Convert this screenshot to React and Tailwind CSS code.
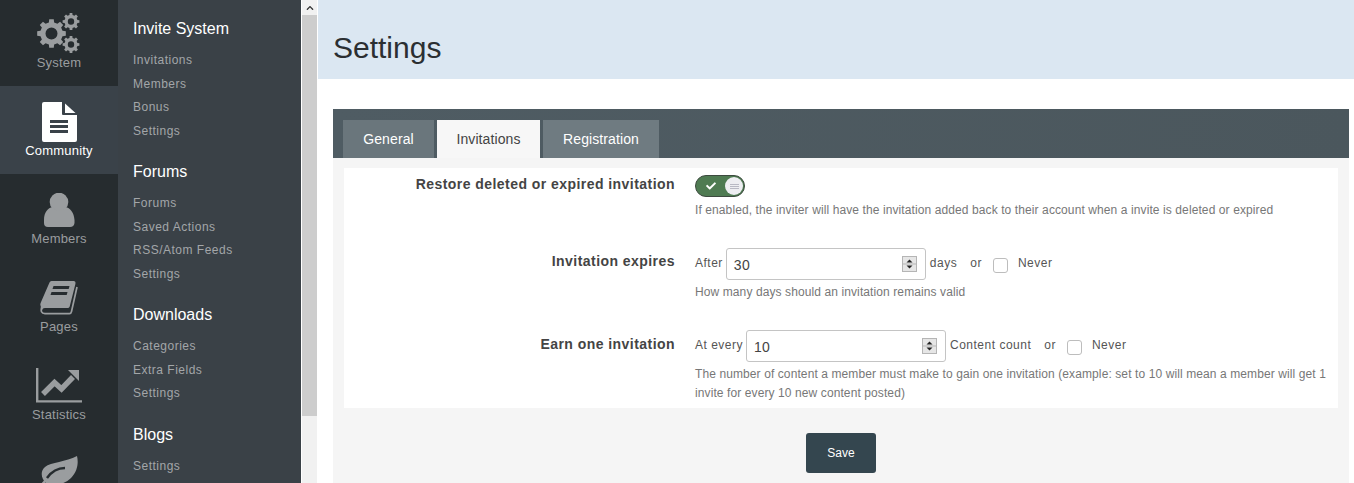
import React from "react";
import { FaCheck, FaChevronUp } from "react-icons/fa";

const font = { fontFamily: '"Liberation Sans", Arial, sans-serif' };

function gearPath(cx, cy, R, r, hole, teeth) {
  const step = (Math.PI * 2) / teeth;
  const pts = [];
  for (let i = 0; i < teeth; i++) {
    const a = i * step - Math.PI / 2;
    const w = step * 0.2;
    const wb = step * 0.3;
    pts.push([a - wb, r], [a - w, R], [a + w, R], [a + wb, r]);
  }
  const d = pts
    .map(([a, rad], i) => `${i ? "L" : "M"}${(cx + rad * Math.cos(a)).toFixed(2)} ${(cy + rad * Math.sin(a)).toFixed(2)}`)
    .join(" ");
  return `${d} Z M${cx - hole} ${cy} a${hole} ${hole} 0 1 0 ${hole * 2} 0 a${hole} ${hole} 0 1 0 ${-hole * 2} 0 Z`;
}

const GearsIcon = () => (
  <svg width="44" height="41" viewBox="0 0 44 41" fill="currentColor">
    <path fillRule="evenodd" d={gearPath(14.5, 20.5, 14.5, 11.3, 6, 8)} />
    <path fillRule="evenodd" d={gearPath(34, 8.5, 8.5, 6.6, 3.2, 8)} />
    <path fillRule="evenodd" d={gearPath(34, 31.5, 8.5, 6.6, 3.2, 8)} />
  </svg>
);

const FileIcon = () => (
  <svg width="35" height="40" viewBox="0 0 35 40" fill="currentColor" className="mt-[2px]">
    <path d="M0 2Q0 0 2 0H20V12Q20 13 21 13H35V38Q35 40 33 40H2Q0 40 0 38Z" />
    <path d="M23 1.5L33.5 11H23Z" />
    <rect x="8" y="18" width="18" height="3" fill="#3a4249" />
    <rect x="8" y="23" width="18" height="3" fill="#3a4249" />
    <rect x="8" y="28" width="18" height="3" fill="#3a4249" />
  </svg>
);

const UserIcon = () => (
  <svg width="32" height="34" viewBox="0 0 32 34" fill="currentColor" className="mt-[1px]">
    <circle cx="16" cy="9" r="9.3" />
    <path d="M1 27C1 19 5 15 9.5 14C12 18.5 20 18.5 22.5 14C27 15 31 19 31.5 27V30Q31 34 27 34H5Q1 34 1 30Z" />
  </svg>
);

const BookIcon = () => (
  <svg width="38" height="34" viewBox="0 0 38 34" fill="currentColor" className="mt-[1px]">
    <path d="M9.5 1.5Q10 0 11.5 0H33.5Q36 0 35.4 3L29.7 25.5Q29.3 27 27.5 27H5Q2 27 2.3 29.5L0.6 25Q0 23.5 0.6 22Z" />
    <path d="M2 25Q-0.5 32.7 5 32.7H29.5Q31 32.7 31.5 30.5L37 6" fill="none" stroke="currentColor" strokeWidth="1.7" />
    <path d="M13.5 5H29.5L28.7 8H12.5Z" fill="#262c2f" />
    <path d="M11.5 11H27.5L26.7 14H10.5Z" fill="#262c2f" />
  </svg>
);

const ChartIcon = () => (
  <svg width="47" height="35" viewBox="0 0 47 35" fill="currentColor" className="mt-[1px]">
    <path d="M1.2 0V33.4H46" fill="none" stroke="currentColor" strokeWidth="2.4" />
    <path d="M7 26L18.5 14.5L25.5 21L37 9" fill="none" stroke="currentColor" strokeWidth="5.5" />
    <path d="M32 2H43V13Z" />
  </svg>
);

const LeafIcon = () => (
  <svg width="42" height="36" viewBox="0 0 42 36" fill="currentColor">
    <path d="M39 1C40.5 7 40 16 33 23C26 30 16 31 8 28C3 24 2 16 7 12C13 7 28 7 39 1Z" />
    <path d="M9 23C14 16 20 13 27 13" fill="none" stroke="#262c2f" strokeWidth="2.5" />
    <path d="M1 33L8 25" fill="none" stroke="currentColor" strokeWidth="2.5" />
  </svg>
);

const navItems = [
  { label: "System", Icon: GearsIcon },
  { label: "Community", Icon: FileIcon, active: true },
  { label: "Members", Icon: UserIcon },
  { label: "Pages", Icon: BookIcon },
  { label: "Statistics", Icon: ChartIcon },
  { label: "", Icon: LeafIcon },
];

const groups = [
  { title: "Invite System", items: ["Invitations", "Members", "Bonus", "Settings"] },
  { title: "Forums", items: ["Forums", "Saved Actions", "RSS/Atom Feeds", "Settings"] },
  { title: "Downloads", items: ["Categories", "Extra Fields", "Settings"] },
  { title: "Blogs", items: ["Settings"] },
];

function NavItem({ label, Icon, active }) {
  return (
    <div className={`h-[88px] shrink-0 flex flex-col items-center ${active ? "bg-[#3a4249] text-white" : "text-[#9a9d9f]"}`}>
      <div className="h-[44px] mt-[13px] flex items-center justify-center">
        <Icon />
      </div>
      <div className="text-[13px] leading-[16px] tracking-[0.2px]">{label}</div>
    </div>
  );
}

function Spinner() {
  return (
    <svg width="15" height="16" viewBox="0 0 15 16" className="shrink-0">
      <rect x="0.5" y="0.5" width="14" height="15" fill="#e6e6e6" stroke="#b5b5b5" />
      <line x1="1" y1="8" x2="14" y2="8" stroke="#b5b5b5" />
      <path d="M7.5 3.5 L10.5 6.5 H4.5 Z" fill="#222" />
      <path d="M7.5 12.5 L10.5 9.5 H4.5 Z" fill="#222" />
    </svg>
  );
}

function NumberBox({ value }) {
  return (
    <div className="w-[200px] h-[32px] shrink-0 border border-[#c4c4c4] rounded-[3px] bg-white flex items-center pl-[7px] pr-[8px]">
      <span className="flex-1 text-[14px] text-[#444] tracking-[0.3px] pt-[3px]">{value}</span>
      <Spinner />
    </div>
  );
}

function Check() {
  return <span className="block w-[15px] h-[15px] border border-[#bdbdbd] rounded-[3px] bg-white shrink-0 mt-[2px]" />;
}

function Row({ label, children, className }) {
  return (
    <div className={`flex ${className}`}>
      <div className="w-[331px] shrink-0 text-right font-bold text-[14px] leading-[16px] tracking-[0.45px] text-[#444]">{label}</div>
      <div className="ml-[20px] flex-1 min-w-0">{children}</div>
    </div>
  );
}

function Control({ lead, value, unit }) {
  return (
    <div className="flex items-center h-[32px] text-[12px] text-[#555] tracking-[0.5px]">
      <span className="mr-[3px] pb-[2px]">{lead}</span>
      <NumberBox value={value} />
      <span className="ml-[4px] pb-[2px]">{unit}</span>
      <span className="ml-[13px] pb-[2px]">or</span>
      <span className="ml-[11px] flex"><Check /></span>
      <span className="ml-[10px] pb-[2px]">Never</span>
    </div>
  );
}

const help = "text-[12px] leading-[19px] text-[#777] tracking-[0.1px]";

export default function App() {
  return (
    <div className="flex h-[483px] w-[1354px] overflow-hidden bg-white" style={font}>
      <nav className="w-[118px] shrink-0 bg-[#262c2f] flex flex-col -mt-[2px] h-[485px] overflow-hidden">
        {navItems.map((n, i) => <NavItem key={i} {...n} />)}
      </nav>

      <aside className="w-[183px] shrink-0 bg-[#3a4147] pl-[15px] pt-[19px]">
        {groups.map((g) => (
          <div key={g.title} className="mb-[19px]">
            <div className="text-[16px] leading-[20px] text-white mb-[10px]">{g.title}</div>
            {g.items.map((it, i) => (
              <div key={i} className="text-[12px] leading-[23.5px] text-[#a3a6a9] tracking-[0.5px]">{it}</div>
            ))}
          </div>
        ))}
      </aside>

      <div className="w-[1px] shrink-0 bg-white" />

      <div className="w-[15px] shrink-0 bg-[#f1f1f1] flex flex-col">
        <div className="h-[15px] flex items-center justify-center text-[#333] bg-[#f1f1f1]">
          <FaChevronUp className="w-[8px] h-[8px]" />
        </div>
        <div className="h-[401px] bg-[#cdcdcd]" />
      </div>

      <main className="flex-1 min-w-0 bg-white ml-[1px]">
        <header className="h-[79px] bg-[#dbe7f2] pl-[15px] flex items-center">
          <h1 className="text-[30px] text-[#2b2f32] mt-[15px]">Settings</h1>
        </header>

        <div className="mt-[30px] ml-[15px] mr-[5px]">
          <div className="h-[49px] bg-gradient-to-r from-[#4f5c63] to-[#4b575d] pl-[10px] flex items-end gap-[3px]">
            <div className="w-[91px] h-[38px] bg-[#6a767c] text-white text-[14px] tracking-[0.1px] flex items-center justify-center">General</div>
            <div className="w-[103px] h-[38px] bg-[#f7f7f7] text-[#444] text-[14px] tracking-[0.1px] flex items-center justify-center">Invitations</div>
            <div className="w-[116px] h-[38px] bg-[#6f7b81] text-white text-[14px] tracking-[0.1px] flex items-center justify-center">Registration</div>
          </div>

          <div className="bg-[#f5f5f5] h-[325px] pt-[10px] px-[11px]">
            <div className="bg-white h-[240px] pt-[8px] pr-[6px]">
              <Row label="Restore deleted or expired invitation" className="h-[77px]">
                <div className="w-[50px] h-[22px] -mt-[1px] rounded-full bg-[#4f7b52] border border-[#3d4a3f] flex items-center justify-between pl-[10px] pr-[1px]">
                  <FaCheck className="w-[10px] h-[10px] text-white" />
                  <span className="w-[18px] h-[18px] rounded-full bg-[#eeeef2] flex flex-col items-center justify-center gap-[1px]">
                    <i className="block w-[9px] h-[1px] bg-[#b9b9c4]" />
                    <i className="block w-[9px] h-[1px] bg-[#b9b9c4]" />
                    <i className="block w-[9px] h-[1px] bg-[#b9b9c4]" />
                  </span>
                </div>
                <div className={`${help} mt-[4px]`}>If enabled, the inviter will have the invitation added back to their account when a invite is deleted or expired</div>
              </Row>

              <Row label="Invitation expires" className="h-[83px]">
                <div className="-mt-[5px]">
                  <Control lead="After" value="30" unit="days" />
                </div>
                <div className={`${help} mt-[3px]`}>How many days should an invitation remains valid</div>
              </Row>

              <Row label="Earn one invitation" className="h-[69px]">
                <div className="-mt-[6px]">
                  <Control lead="At every" value="10" unit="Content count" />
                </div>
                <div className={`${help} mt-[3px]`}>The number of content a member must make to gain one invitation (example: set to 10 will mean a member will get 1 invite for every 10 new content posted)</div>
              </Row>
            </div>
            <div className="flex justify-center mt-[25px]">
              <button className="w-[70px] h-[40px] bg-[#34464f] text-white text-[12px] rounded-[3px]">Save</button>
            </div>
          </div>
        </div>
      </main>
    </div>
  );
}
